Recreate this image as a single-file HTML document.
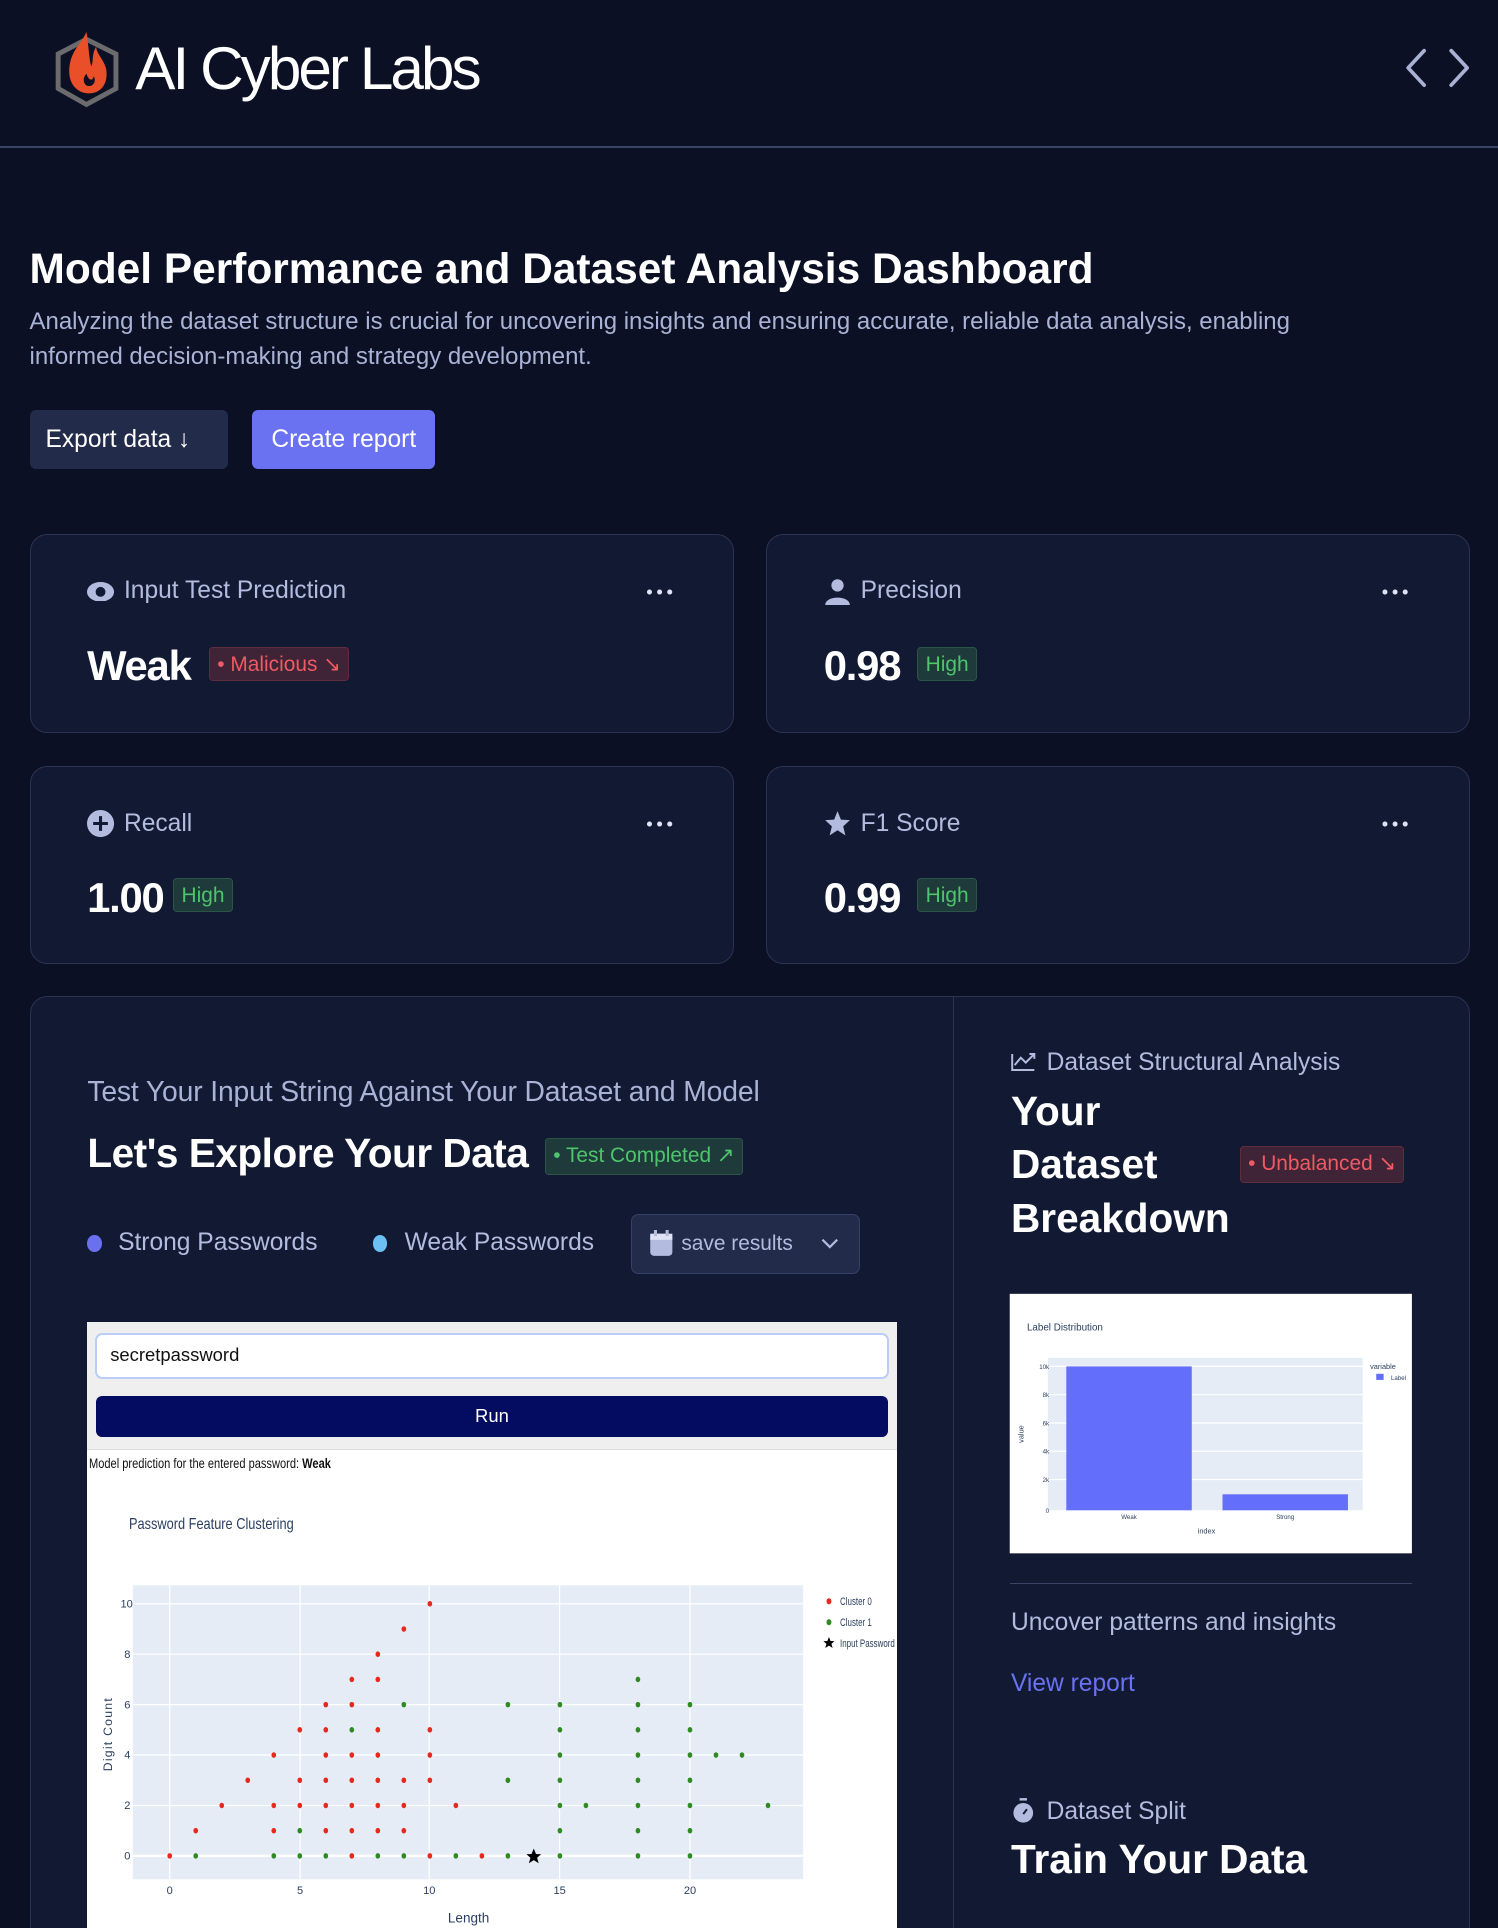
<!DOCTYPE html>
<html><head><meta charset="utf-8"><style>
html,body{margin:0;padding:0;background:#0b1024;width:1498px;height:1928px;overflow:hidden}
#w{zoom:1.22989;width:1218px;height:1568px;position:relative;font-family:"Liberation Sans",sans-serif;color:#fff}
.a{position:absolute;white-space:nowrap}
.card{position:absolute;background:#121a33;border:1px solid #2a3352;border-radius:14px;box-sizing:border-box}
.ct{position:absolute;left:46px;top:33px;font-size:20px;color:#b3bbdf;line-height:26px;display:flex;align-items:center;gap:8px}
.dots{position:absolute;right:46px;top:38px;font-size:15px;color:#dfe3f5;letter-spacing:3px;line-height:16px}
.val{position:absolute;left:46px;top:86px;font-size:34px;font-weight:bold;line-height:40px;letter-spacing:-1px}
.bg{position:absolute;font-size:17px;line-height:28px;height:28px;padding:0 6px;border-radius:3px;box-sizing:border-box}
.hi{background:#1e3a3a;border:1px solid #2c5546;color:#4cc56b}
.mal{background:#3f2337;border:1px solid #5e2c3d;color:#ef5a63}
</style></head><body><div id="w">
<div class="a" style="left:0;top:119px;width:1218px;height:1px;background:#3a4464"></div>
<svg class="a" style="left:42px;top:22px" width="60" height="70" viewBox="0 0 60 70">
<polygon points="28,10 52,22 52,50 28,63 5,50 5,22" fill="none" stroke="#6b6b6e" stroke-width="4"/>
<path d="M28 4 C24 14 14 20 14 36 C14 48 22 54 30 54 C40 54 46 46 44 34 C42 26 36 22 36 16 C32 22 34 28 32 32 C30 26 30 16 28 4Z" fill="#e9502a"/>
<path d="M28 38 C24 42 26 48 30 48 C34 48 36 44 34 40 C33 44 30 44 28 38Z" fill="#0b1024"/>
</svg>
<div class="a" style="left:110px;top:26px;font-size:49px;line-height:60px;letter-spacing:-2.4px;color:#fff">AI Cyber Labs</div>
<svg class="a" style="left:1140px;top:38px" width="58" height="34" viewBox="0 0 58 34"><path d="M18 3 L5 17 L18 31 M40 3 L53 17 L40 31" fill="none" stroke="#a9b1d4" stroke-width="3" stroke-linecap="round" stroke-linejoin="round"/></svg>

<div class="a" style="left:24px;top:198px;font-size:34.5px;font-weight:bold;line-height:40px;letter-spacing:0px">Model Performance and Dataset Analysis Dashboard</div>
<div class="a" style="left:24px;top:247px;font-size:19.5px;line-height:29px;color:#aab3d6;white-space:normal;width:1100px">Analyzing the dataset structure is crucial for uncovering insights and ensuring accurate, reliable data analysis, enabling informed decision-making and strategy development.</div>
<div class="a" style="left:24px;top:333px;width:161px;height:48px;background:#222b49;border-radius:5px;font-size:20px;line-height:48px;text-indent:13px">Export data <span style="font-size:20px">↓</span></div>
<div class="a" style="left:205px;top:333px;width:149px;height:48px;background:#6b72f1;border-radius:5px;font-size:20px;line-height:48px;text-align:center">Create report</div>

<div class="card" style="left:24px;top:434px;width:573px;height:162px">
 <div class="ct"><svg width="22" height="16" viewBox="0 0 22 16"><ellipse cx="11" cy="8" rx="11" ry="8" fill="#b3bbdf"/><circle cx="11" cy="8" r="4" fill="#121a33"/></svg>Input Test Prediction</div>
 <div class="dots">•••</div>
 <div class="val">Weak</div>
 <div class="bg mal" style="left:145px;top:91px">• Malicious ↘</div>
</div>
<div class="card" style="left:623px;top:434px;width:572px;height:162px">
 <div class="ct"><svg width="22" height="22" viewBox="0 0 22 22"><circle cx="11" cy="6" r="5" fill="#b3bbdf"/><path d="M1 22 C1 14 21 14 21 22Z" fill="#b3bbdf"/></svg>Precision</div>
 <div class="dots">•••</div>
 <div class="val">0.98</div>
 <div class="bg hi" style="left:122px;top:91px">High</div>
</div>
<div class="card" style="left:24px;top:623px;width:573px;height:161px">
 <div class="ct"><svg width="22" height="22" viewBox="0 0 22 22"><circle cx="11" cy="11" r="11" fill="#b3bbdf"/><path d="M11 5V17M5 11H17" stroke="#121a33" stroke-width="2.5"/></svg>Recall</div>
 <div class="dots">•••</div>
 <div class="val">1.00</div>
 <div class="bg hi" style="left:116px;top:90px">High</div>
</div>
<div class="card" style="left:623px;top:623px;width:572px;height:161px">
 <div class="ct"><svg width="22" height="22" viewBox="0 0 24 24"><path d="M12 1 L15 8.5 L23 9 L17 14.5 L19 22.5 L12 18 L5 22.5 L7 14.5 L1 9 L9 8.5Z" fill="#b3bbdf"/></svg>F1 Score</div>
 <div class="dots">•••</div>
 <div class="val">0.99</div>
 <div class="bg hi" style="left:122px;top:90px">High</div>
</div>

<div class="a" style="left:24px;top:810px;width:1171px;height:800px;background:#121a33;border:1px solid #2a3352;border-radius:14px;box-sizing:border-box"></div>
<div class="a" style="left:775px;top:811px;width:1px;height:760px;background:#2a3352"></div>

<div class="a" style="left:71px;top:873px;font-size:23px;line-height:28px;color:#aab3d6;letter-spacing:-0.1px">Test Your Input String Against Your Dataset and Model</div>
<div class="a" style="left:71px;top:918px;font-size:33px;font-weight:bold;line-height:40px;letter-spacing:-0.4px">Let's Explore Your Data</div>
<div class="bg hi" style="left:443px;top:925px;height:30px;line-height:28px;font-size:17px">• Test Completed ↗</div>
<div class="a" style="left:71px;top:1004px;width:12px;height:14px;border-radius:50%;background:#6a70f0"></div>
<div class="a" style="left:96px;top:997px;font-size:20px;line-height:28px;color:#b3bbdf">Strong Passwords</div>
<div class="a" style="left:303px;top:1004px;width:12px;height:14px;border-radius:50%;background:#6cc0f4"></div>
<div class="a" style="left:329px;top:997px;font-size:20px;line-height:28px;color:#b3bbdf">Weak Passwords</div>
<div class="a" style="left:513px;top:987px;width:186px;height:49px;box-sizing:border-box;background:#222b49;border:1px solid #36406a;border-radius:6px"></div>
<svg class="a" style="left:528px;top:1000px" width="20" height="22" viewBox="0 0 20 22"><rect x="1" y="3" width="18" height="18" rx="3" fill="#b3bbdf"/><rect x="1" y="3" width="18" height="5" fill="#dfe3f5"/><rect x="4" y="0" width="2.5" height="5" fill="#b3bbdf"/><rect x="13.5" y="0" width="2.5" height="5" fill="#b3bbdf"/></svg>
<div class="a" style="left:554px;top:1000px;font-size:17px;line-height:22px;color:#b3bbdf">save results</div>
<svg class="a" style="left:667px;top:1005px" width="16" height="12" viewBox="0 0 16 12"><path d="M2 3 L8 9 L14 3" fill="none" stroke="#b3bbdf" stroke-width="1.8"/></svg>

<div class="a" style="left:71px;top:1075px;width:658px;height:493px;background:#fff"></div>
<div class="a" style="left:71px;top:1075px;width:658px;height:103px;background:#efefef;border-bottom:1px solid #ddd"></div>
<div class="a" style="left:77px;top:1084px;width:646px;height:37px;box-sizing:border-box;background:#fff;border:2px solid #b9cdf6;border-radius:6px;font-size:15px;line-height:33px;color:#111;text-indent:11px">secretpassword</div>
<div class="a" style="left:78px;top:1135px;width:644px;height:33px;background:#030c60;border-radius:5px;color:#fff;font-size:15px;line-height:33px;text-align:center">Run</div>
<div class="a" style="left:72px;top:1183px;font-size:11px;line-height:14px;color:#111;transform:scaleX(.82);transform-origin:left">Model prediction for the entered password: <b>Weak</b></div>
<div class="a" style="left:105px;top:1232px;font-size:13px;line-height:16px;color:#2a3f5f;transform:scaleX(.8);transform-origin:left">Password Feature Clustering</div>

<svg class="a" style="left:0;top:0" width="1218" height="1568" viewBox="0 0 1218 1568">
<rect x="108" y="1289" width="545" height="239" fill="#e5ecf6"/>
<g stroke="#fff" stroke-width="1">
<line x1="138" y1="1289" x2="138" y2="1528"/><line x1="244" y1="1289" x2="244" y2="1528"/><line x1="349" y1="1289" x2="349" y2="1528"/><line x1="455" y1="1289" x2="455" y2="1528"/><line x1="561" y1="1289" x2="561" y2="1528"/>
<line x1="108" y1="1509" x2="653" y2="1509" stroke-width="2"/><line x1="108" y1="1468" x2="653" y2="1468"/><line x1="108" y1="1427" x2="653" y2="1427"/><line x1="108" y1="1386" x2="653" y2="1386"/><line x1="108" y1="1345" x2="653" y2="1345"/><line x1="108" y1="1304" x2="653" y2="1304"/>
</g>
<g font-family="Liberation Sans Narrow, Liberation Sans, sans-serif" font-size="9" fill="#2a3f5f" text-anchor="end">
<text x="106" y="1512">0</text><text x="106" y="1471">2</text><text x="106" y="1430">4</text><text x="106" y="1389">6</text><text x="106" y="1348">8</text><text x="108" y="1307">10</text>
</g>
<g font-family="Liberation Sans, sans-serif" font-size="9" fill="#2a3f5f" text-anchor="middle">
<text x="138" y="1540">0</text><text x="244" y="1540">5</text><text x="349" y="1540">10</text><text x="455" y="1540">15</text><text x="561" y="1540">20</text>
<text x="381" y="1563" font-size="11">Length</text>
<text transform="translate(91 1410) rotate(-90)" font-size="10" letter-spacing="1">Digit Count</text>
</g>
<g transform="translate(138 1509) scale(21.15 -20.5)" fill="#e8281d">
<ellipse cx="0" cy="0" rx=".09" ry=".11"/><ellipse cx="1" cy="1" rx=".09" ry=".11"/><ellipse cx="2" cy="2" rx=".09" ry=".11"/><ellipse cx="3" cy="3" rx=".09" ry=".11"/>
<ellipse cx="4" cy="4" rx=".09" ry=".11"/><ellipse cx="4" cy="2" rx=".09" ry=".11"/><ellipse cx="4" cy="1" rx=".09" ry=".11"/>
<ellipse cx="5" cy="5" rx=".09" ry=".11"/><ellipse cx="5" cy="3" rx=".09" ry=".11"/><ellipse cx="5" cy="2" rx=".09" ry=".11"/>
<ellipse cx="6" cy="6" rx=".09" ry=".11"/><ellipse cx="6" cy="5" rx=".09" ry=".11"/><ellipse cx="6" cy="4" rx=".09" ry=".11"/><ellipse cx="6" cy="3" rx=".09" ry=".11"/><ellipse cx="6" cy="2" rx=".09" ry=".11"/><ellipse cx="6" cy="1" rx=".09" ry=".11"/>
<ellipse cx="7" cy="7" rx=".09" ry=".11"/><ellipse cx="7" cy="6" rx=".09" ry=".11"/><ellipse cx="7" cy="4" rx=".09" ry=".11"/><ellipse cx="7" cy="3" rx=".09" ry=".11"/><ellipse cx="7" cy="2" rx=".09" ry=".11"/><ellipse cx="7" cy="1" rx=".09" ry=".11"/><ellipse cx="7" cy="0" rx=".09" ry=".11"/>
<ellipse cx="8" cy="8" rx=".09" ry=".11"/><ellipse cx="8" cy="7" rx=".09" ry=".11"/><ellipse cx="8" cy="5" rx=".09" ry=".11"/><ellipse cx="8" cy="4" rx=".09" ry=".11"/><ellipse cx="8" cy="3" rx=".09" ry=".11"/><ellipse cx="8" cy="2" rx=".09" ry=".11"/><ellipse cx="8" cy="1" rx=".09" ry=".11"/>
<ellipse cx="9" cy="9" rx=".09" ry=".11"/><ellipse cx="9" cy="3" rx=".09" ry=".11"/><ellipse cx="9" cy="2" rx=".09" ry=".11"/><ellipse cx="9" cy="1" rx=".09" ry=".11"/>
<ellipse cx="10" cy="10" rx=".09" ry=".11"/><ellipse cx="10" cy="5" rx=".09" ry=".11"/><ellipse cx="10" cy="4" rx=".09" ry=".11"/><ellipse cx="10" cy="3" rx=".09" ry=".11"/><ellipse cx="10" cy="0" rx=".09" ry=".11"/>
<ellipse cx="11" cy="2" rx=".09" ry=".11"/><ellipse cx="12" cy="0" rx=".09" ry=".11"/>
</g>
<g transform="translate(138 1509) scale(21.15 -20.5)" fill="#2f8a22">
<ellipse cx="1" cy="0" rx=".09" ry=".11"/><ellipse cx="4" cy="0" rx=".09" ry=".11"/><ellipse cx="5" cy="1" rx=".09" ry=".11"/><ellipse cx="5" cy="0" rx=".09" ry=".11"/><ellipse cx="6" cy="0" rx=".09" ry=".11"/><ellipse cx="7" cy="5" rx=".09" ry=".11"/><ellipse cx="8" cy="0" rx=".09" ry=".11"/><ellipse cx="9" cy="6" rx=".09" ry=".11"/><ellipse cx="9" cy="0" rx=".09" ry=".11"/><ellipse cx="11" cy="0" rx=".09" ry=".11"/>
<ellipse cx="13" cy="6" rx=".09" ry=".11"/><ellipse cx="13" cy="3" rx=".09" ry=".11"/><ellipse cx="13" cy="0" rx=".09" ry=".11"/>
<ellipse cx="15" cy="6" rx=".09" ry=".11"/><ellipse cx="15" cy="5" rx=".09" ry=".11"/><ellipse cx="15" cy="4" rx=".09" ry=".11"/><ellipse cx="15" cy="3" rx=".09" ry=".11"/><ellipse cx="15" cy="2" rx=".09" ry=".11"/><ellipse cx="15" cy="1" rx=".09" ry=".11"/><ellipse cx="15" cy="0" rx=".09" ry=".11"/>
<ellipse cx="16" cy="2" rx=".09" ry=".11"/>
<ellipse cx="18" cy="7" rx=".09" ry=".11"/><ellipse cx="18" cy="6" rx=".09" ry=".11"/><ellipse cx="18" cy="5" rx=".09" ry=".11"/><ellipse cx="18" cy="4" rx=".09" ry=".11"/><ellipse cx="18" cy="3" rx=".09" ry=".11"/><ellipse cx="18" cy="2" rx=".09" ry=".11"/><ellipse cx="18" cy="1" rx=".09" ry=".11"/><ellipse cx="18" cy="0" rx=".09" ry=".11"/>
<ellipse cx="20" cy="6" rx=".09" ry=".11"/><ellipse cx="20" cy="5" rx=".09" ry=".11"/><ellipse cx="20" cy="4" rx=".09" ry=".11"/><ellipse cx="20" cy="3" rx=".09" ry=".11"/><ellipse cx="20" cy="2" rx=".09" ry=".11"/><ellipse cx="20" cy="1" rx=".09" ry=".11"/><ellipse cx="20" cy="0" rx=".09" ry=".11"/>
<ellipse cx="21" cy="4" rx=".09" ry=".11"/><ellipse cx="22" cy="4" rx=".09" ry=".11"/><ellipse cx="23" cy="2" rx=".09" ry=".11"/>
</g>
<path d="M434 1503 L435.8 1507.5 L440 1507.7 L436.7 1510.5 L438 1515 L434 1512.4 L430 1515 L431.3 1510.5 L428 1507.7 L432.2 1507.5Z" fill="#000"/>
<ellipse cx="674" cy="1302" rx="2" ry="2.5" fill="#e8281d"/><ellipse cx="674" cy="1319" rx="2" ry="2.5" fill="#2f8a22"/>
<path d="M674 1331 L675.3 1334.3 L678.5 1334.5 L676 1336.6 L677 1340 L674 1338 L671 1340 L672 1336.6 L669.5 1334.5 L672.7 1334.3Z" fill="#000"/>
<g font-family="Liberation Sans, sans-serif" font-size="9" fill="#2a3f5f" transform="translate(683 0) scale(.72 1)">
<text x="0" y="1305">Cluster 0</text><text x="0" y="1322">Cluster 1</text><text x="0" y="1339">Input Password</text>
</g>

<rect x="821" y="1052" width="327" height="211" fill="#fff"/>
<rect x="852" y="1104" width="256" height="124" fill="#e5ecf6"/>
<g stroke="#fff" stroke-width="1"><line x1="852" y1="1111" x2="1108" y2="1111"/><line x1="852" y1="1134" x2="1108" y2="1134"/><line x1="852" y1="1157" x2="1108" y2="1157"/><line x1="852" y1="1180" x2="1108" y2="1180"/><line x1="852" y1="1203" x2="1108" y2="1203"/></g>
<rect x="867" y="1111" width="102" height="117" fill="#636efa"/>
<rect x="994" y="1215" width="102" height="13" fill="#636efa"/>
<g font-family="Liberation Sans, sans-serif" fill="#2a3f5f">
<text x="835" y="1082" font-size="8">Label Distribution</text>
<g font-size="5" text-anchor="end"><text x="853" y="1113">10k</text><text x="853" y="1136">8k</text><text x="853" y="1159">6k</text><text x="853" y="1182">4k</text><text x="853" y="1205">2k</text><text x="853" y="1230">0</text></g>
<g font-size="5" text-anchor="middle"><text x="918" y="1235">Weak</text><text x="1045" y="1235">Strong</text><text x="981" y="1247" font-size="6">index</text></g>
<text transform="translate(832 1166) rotate(-90)" font-size="6" text-anchor="middle">value</text>
<text x="1114" y="1113" font-size="6">variable</text>
<rect x="1119" y="1117" width="6" height="5" fill="#636efa"/><text x="1131" y="1122" font-size="5">Label</text>
</g>
<path d="M823 857 V870 H841 M825 866 L830 860 L834 864 L841 857 M837 857 H841 V861" fill="none" stroke="#b3bbdf" stroke-width="1.6"/>
<circle cx="832" cy="1474" r="8" fill="#b3bbdf"/><rect x="829" y="1462" width="6" height="2" fill="#b3bbdf"/><path d="M832 1475 L835 1471" stroke="#121a33" stroke-width="1.6"/>
</svg>

<div class="a" style="left:851px;top:851px;font-size:20px;line-height:26px;color:#b3bbdf">Dataset Structural Analysis</div>
<div class="a" style="left:822px;top:882px;font-size:33px;font-weight:bold;line-height:43.5px;white-space:normal;width:200px">Your Dataset Breakdown</div>
<div class="bg mal" style="left:1008px;top:932px;height:30px;line-height:28px;font-size:17px">• Unbalanced ↘</div>
<div class="a" style="left:821px;top:1287px;width:327px;height:1px;background:#3a4464"></div>
<div class="a" style="left:822px;top:1307px;font-size:20px;line-height:26px;color:#b3bbdf">Uncover patterns and insights</div>
<div class="a" style="left:822px;top:1356px;font-size:20px;line-height:26px;color:#6b72f1">View report</div>
<div class="a" style="left:851px;top:1460px;font-size:20px;line-height:26px;color:#b3bbdf">Dataset Split</div>
<div class="a" style="left:822px;top:1492px;font-size:33px;font-weight:bold;line-height:40px">Train Your Data</div>
</div></body></html>
